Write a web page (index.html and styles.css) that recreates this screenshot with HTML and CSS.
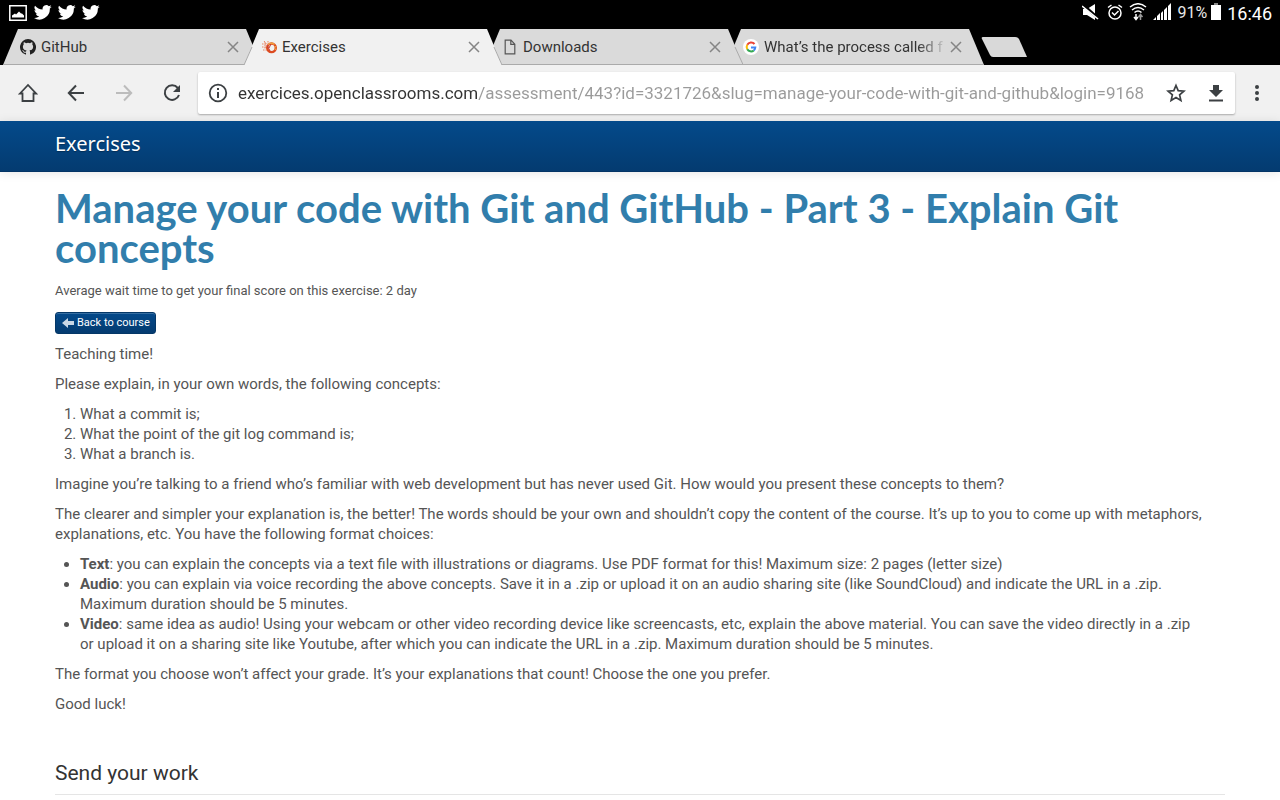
FILE: index.html
```html
<!DOCTYPE html>
<html lang="en">
<head>
<meta charset="utf-8">
<meta name="viewport" content="width=device-width, initial-scale=1">
<title>Exercises</title>
<link rel="stylesheet" href="styles.css">
</head>
<body>
<svg class="defs" aria-hidden="true">
  <symbol id="bird" viewBox="0 0 24 24"><path d="M23.6 4.9a9.700 9.700 0 0 1-2.800.8 4.900 4.900 0 0 0 2.100-2.700 9.700 9.700 0 0 1-3.100 1.200 4.900 4.900 0 0 0-8.300 4.400A13.900 13.900 0 0 1 1.400 3.500a4.900 4.900 0 0 0 1.500 6.500 4.900 4.900 0 0 1-2.200-.6c0 2.300 1.600 4.400 3.900 4.900a4.900 4.900 0 0 1-2.200.1 4.900 4.900 0 0 0 4.600 3.400A9.900 9.900 0 0 1-.3 19.800 13.900 13.900 0 0 0 21.100 7.400a10 10 0 0 0 2.500-2.500z"/></symbol>
  <symbol id="close" viewBox="0 0 12 12"><path d="M1 1l10 10M11 1L1 11" fill="none" stroke="#858585" stroke-width="1.500"/></symbol>
</svg>

<header class="browser">
  <div class="status">
    <div class="status-group">
      <svg width="18" height="18" viewBox="0 0 18 18"><path d="M.8 2.800h16.400v14.400H.8z" fill="none" stroke="#fff" stroke-width="1.500"/><path d="M3 14.500v-2l3-2 1 1 3-3 2 2h1l2 2v2z" fill="#fff"/></svg>
      <div class="birds">
        <svg width="18" height="18"><use href="#bird"/></svg>
        <svg width="18" height="18"><use href="#bird"/></svg>
        <svg width="18" height="18"><use href="#bird"/></svg>
      </div>
    </div>
    <div class="status-group">
      <svg class="mute" width="17" height="18" viewBox="0 0 17 18"><path d="M1 6h4l8-5v16L5 12H1z" fill="#fff"/><path d="M0 1l17 15" stroke="#000" stroke-width="3"/><path d="M0 3l16 13" stroke="#fff" stroke-width="1.600"/></svg>
      <svg width="16" height="18" viewBox="0 0 16 18" fill="none" stroke="#fff" stroke-width="1.500"><circle cx="8" cy="10" r="6"/><path d="M5 9.500l2.500 2.500 4-4M1 4.500L4.500 2M15 4.500L11.500 2"/></svg>
      <svg width="18" height="18" viewBox="0 0 18 18" fill="none" stroke="#fff" stroke-width="1.500"><path d="M1 4q8-6.500 16 0M3 7q6-5 12 0M5.500 9.500q3.500-3 7 0"/><path d="M7 11v5M5 14l2 2.500L9 14" /><path d="M11.500 17v-5M9.500 14l2-2.500 2 2.500" stroke="#999"/></svg>
      <svg width="18" height="18" viewBox="0 0 18 18" fill="#fff"><path d="M0 17l3-3v3zM4 13l3-3v7H4zM8 10l2-2v9H8zM11 7l3-3v13h-3zM15 3l3-3v17h-3z"/></svg>
      <span class="battery-text">91%</span>
      <svg width="10" height="17" viewBox="0 0 10 17"><path d="M3 1h4" stroke="#888" stroke-width="2"/><path d="M0 2h10v15H0z" fill="#fff"/></svg>
      <time class="clock">16:46</time>
    </div>
  </div>

  <nav class="tabs" aria-label="Open tabs">
    <div class="tab">
      <svg class="tab-shape" viewBox="0 0 258 36" preserveAspectRatio="none"><path d="M0 36L15 0H243L258 36z" fill="#dadada"/><path d="M0 35.500H258" stroke="#aaa"/></svg>
      <svg class="favicon" width="16" height="16" viewBox="0 0 16 16"><path fill="#222" d="M8 0a8 8 0 0 0-2.530 15.590c.4.070.55-.17.55-.38v-1.490c-2.230.49-2.700-.95-2.700-.95-.36-.92-.89-1.170-.89-1.170-.73-.5.060-.49.060-.49.800.06 1.230.83 1.230.83.710 1.220 1.870.87 2.330.67.070-.52.280-.87.510-1.070-1.780-.2-3.650-.89-3.650-3.950 0-.87.310-1.590.83-2.150-.08-.2-.36-1.020.080-2.120 0 0 .67-.21 2.200.82a7.600 7.600 0 0 1 4 0c1.530-1.030 2.200-.82 2.200-.82.440 1.100.160 1.920.080 2.120.52.560.82 1.280.82 2.150 0 3.070-1.870 3.750-3.650 3.950.29.250.54.730.54 1.480v2.190c0 .21.150.46.550.38A8 8 0 0 0 8 0z"/></svg>
      <a class="tab-title" href="#">GitHub</a>
      <button class="tab-close" aria-label="Close GitHub"><svg width="12" height="12"><use href="#close"/></svg></button>
    </div>
    <div class="tab tab-active">
      <svg class="tab-shape" viewBox="0 0 258 36" preserveAspectRatio="none"><path d="M0 36L15 0H243L258 36z" fill="#f1f1f1"/><path d="M0 36L8 18M250 18L258 36" stroke="#aaa"/></svg>
      <svg class="favicon" width="16" height="16" viewBox="0 0 16 16" fill="none"><circle cx="10.500" cy="8.800" r="4.300" stroke="#dc4b20" stroke-width="2.400"/><path d="M7 5.500q3.500-2.500 6.500 0" stroke="#f0a13e" stroke-width="1.500"/><path d="M14.500 7v4" stroke="#f0a13e" stroke-width="1.500" stroke-dasharray="1.500 1"/><path d="M1 5h5M1 8h5M2 11h4M3 2l4 5M7 2v5M4 3v7" stroke="#e98563" stroke-dasharray="1.500 1"/><path d="M6 6l3 6M10 5l-2 4" stroke="#c9362c"/></svg>
      <a class="tab-title" href="#" aria-current="page">Exercises</a>
      <button class="tab-close" aria-label="Close Exercises"><svg width="12" height="12"><use href="#close"/></svg></button>
    </div>
    <div class="tab tab-third">
      <svg class="tab-shape" viewBox="0 0 258 36" preserveAspectRatio="none"><path d="M0 36L15 0H243L258 36z" fill="#dadada"/><path d="M0 35.500H258L250 18" fill="none" stroke="#aaa"/></svg>
      <svg class="favicon" width="16" height="16" viewBox="0 0 16 16"><path d="M3.200 1.200h5.800l3.800 4v9.600H3.200zM8.800 1.200v4.200h4" fill="none" stroke="#555" stroke-width="1.200"/></svg>
      <a class="tab-title" href="#">Downloads</a>
      <button class="tab-close" aria-label="Close Downloads"><svg width="12" height="12"><use href="#close"/></svg></button>
    </div>
    <div class="tab">
      <svg class="tab-shape" viewBox="0 0 258 36" preserveAspectRatio="none"><path d="M0 36L15 0H243L258 36z" fill="#dadada"/><path d="M0 35.500H258" stroke="#aaa"/></svg>
      <svg class="favicon" width="16" height="16" viewBox="0 0 16 16" fill="none" stroke-width="2"><circle cx="8" cy="8" r="8" fill="#fff"/><path d="M11.500 5A4.300 4.300 0 0 0 4.300 5.800" stroke="#ea4335"/><path d="M4.300 5.800a4.300 4.300 0 0 0 0 4.400" stroke="#fbbc05"/><path d="M4.300 10.200a4.300 4.300 0 0 0 6.500 1.200" stroke="#34a853"/><path d="M10.800 11.400A4.300 4.300 0 0 0 12.300 8.500H8" stroke="#4285f4"/></svg>
      <a class="tab-title tab-title-faded" href="#">What’s the process called f</a>
      <button class="tab-close" aria-label="Close search"><svg width="12" height="12"><use href="#close"/></svg></button>
    </div>
    <button class="new-tab" aria-label="New tab"><svg width="46" height="20" viewBox="0 0 46 20"><path d="M2 0H34Q37 0 38 2L46 20H12Q10 20 9 18L1 2Q0 0 2 0z" fill="#d9d9d9"/></svg></button>
  </nav>

  <div class="toolbar">
    <button class="tool" aria-label="Home"><svg width="20" height="20" viewBox="0 0 20 20"><path d="M2 10.500L10 2l8 8.500h-2.500V18h-11v-7.500z" fill="none" stroke="#3c4043" stroke-width="1.800"/></svg></button>
    <button class="tool" aria-label="Back"><svg width="20" height="20" viewBox="0 0 20 20"><path d="M18 10H3M10 2.500L2.800 10l7.200 7.500" fill="none" stroke="#3c4043" stroke-width="2"/></svg></button>
    <button class="tool" aria-label="Forward" disabled><svg width="20" height="20" viewBox="0 0 20 20"><path d="M2 10h15M10 2.500l7.200 7.500-7.200 7.500" fill="none" stroke="#bcbcbc" stroke-width="2"/></svg></button>
    <button class="tool" aria-label="Reload"><svg width="20" height="20" viewBox="0 0 20 20"><path d="M15.800 5A7.300 7.300 0 1 0 17 12" fill="none" stroke="#3c4043" stroke-width="2"/><path d="M18 2v7h-7z" fill="#3c4043"/></svg></button>
    <div class="address">
      <svg width="20" height="20" viewBox="0 0 20 20"><circle cx="10" cy="10" r="8.300" fill="none" stroke="#3c4043" stroke-width="1.800"/><path d="M10 5v2M10 9v6" stroke="#3c4043" stroke-width="2"/></svg>
      <input class="url" type="text" aria-label="Address" value="exercices.openclassrooms.com/assessment/443?id=3321726&amp;slug=manage-your-code-with-git-and-github&amp;login=9168">
      <button class="tool-small" aria-label="Bookmark"><svg width="20" height="20" viewBox="0 0 20 20"><path d="M10 2.500l2.200 5.200 5.700.5-4.300 3.700 1.300 5.500-4.900-2.900-4.900 2.900 1.300-5.500-4.300-3.700 5.700-.5z" fill="none" stroke="#3c4043" stroke-width="1.700"/></svg></button>
      <button class="tool-small" aria-label="Download"><svg width="20" height="20" viewBox="0 0 20 20"><path d="M7 2h6v5h4l-7 7-7-7h4zM3 16.500h14v2H3z" fill="#3c4043"/></svg></button>
    </div>
    <button class="menu" aria-label="Menu"><svg width="20" height="20" viewBox="0 0 20 20" fill="#3c4043"><circle cx="10" cy="4" r="2"/><circle cx="10" cy="10" r="2"/><circle cx="10" cy="16" r="2"/></svg></button>
  </div>
</header>

<div class="navbar"><div class="container"><a class="brand" href="#">Exercises</a></div></div>

<main class="container">
  <h1>Manage your code with Git and GitHub - Part 3 - Explain Git concepts</h1>
  <p class="wait">Average wait time to get your final score on this exercise: 2 day</p>
  <a class="back" href="#"><svg width="12" height="10" viewBox="0 0 12 10"><path d="M0 5l6-5v3h6v4H6v3z" fill="#c9d7e5"/></svg>Back to course</a>
  <p>Teaching time!</p>
  <p>Please explain, in your own words, the following concepts:</p>
  <ol>
    <li>What a commit is;</li>
    <li>What the point of the git log command is;</li>
    <li>What a branch is.</li>
  </ol>
  <p>Imagine you’re talking to a friend who’s familiar with web development but has never used Git. How would you present these concepts to them?</p>
  <p>The clearer and simpler your explanation is, the better! The words should be your own and shouldn’t copy the content of the course. It’s up to you to come up with metaphors, explanations, etc. You have the following format choices:</p>
  <ul>
    <li><strong>Text</strong>: you can explain the concepts via a text file with illustrations or diagrams. Use PDF format for this! Maximum size: 2 pages (letter size)</li>
    <li><strong>Audio</strong>: you can explain via voice recording the above concepts. Save it in a .zip or upload it on an audio sharing site (like SoundCloud) and indicate the URL in a .zip. Maximum duration should be 5 minutes.</li>
    <li><strong>Video</strong>: same idea as audio! Using your webcam or other video recording device like screencasts, etc, explain the above material. You can save the video directly in a .zip or upload it on a sharing site like Youtube, after which you can indicate the URL in a .zip. Maximum duration should be 5 minutes.</li>
  </ul>
  <p>The format you choose won’t affect your grade. It’s your explanations that count! Choose the one you prefer.</p>
  <p>Good luck!</p>
  <h2>Send your work</h2>
</main>
</body>
</html>
```
FILE: styles.css
```css
* { box-sizing: border-box; }
body { margin: 0; background: #fff; color: #555; font: 15px/20px Roboto, sans-serif; }
svg { display: block; flex: none; }
button { padding: 0; border: 0; background: none; font: inherit; }
a { color: inherit; text-decoration: none; }
.defs { position: absolute; width: 0; height: 0; }

.browser { background: #000; }
.status { display: flex; justify-content: space-between; height: 29px; padding: 3px 8px 0 9px; color: #fff; }
.status-group { display: flex; align-items: flex-start; gap: 6px; }
.birds { display: flex; gap: 6px; margin-left: 1px; fill: #fff; }
.mute { margin-right: 2px; }
.battery-text { font-size: 16px; line-height: 20px; color: #e8e8e8; margin-right: -2px; }
.clock { font-size: 18px; line-height: 22px; }

.tabs { display: flex; height: 36px; padding-left: 3px; }
.tab { position: relative; display: flex; align-items: center; flex: 0 1 258px; min-width: 0; padding: 0 22px 0 17px; margin-right: -17px; }
.tab-active { z-index: 2; }
.tab-third { z-index: 1; }
.tab-shape { position: absolute; inset: 0; width: 100%; height: 100%; }
.favicon { position: relative; }
.tab-title { position: relative; flex: 1; min-width: 0; margin: 0 6px 0 5px; overflow: hidden; white-space: nowrap; color: #333; }
.tab-title-faded { -webkit-mask-image: linear-gradient(90deg, #000 85%, transparent 102%); mask-image: linear-gradient(90deg, #000 85%, transparent 102%); }
.tab-close { position: relative; }
.new-tab { align-self: center; margin-left: 14px; }

.toolbar { display: flex; align-items: center; height: 56px; background: #f1f1f1; padding: 0 0 0 4px; }
.tool { display: flex; justify-content: center; width: 48px; }
.address { display: flex; align-items: center; flex: 1; min-width: 0; height: 42px; margin-left: 2px; padding: 0 9px 0 10px; border-radius: 2px; background: #fff; box-shadow: 0 1px 2px rgba(0,0,0,.3); }
.url { flex: 1; min-width: 0; height: 32px; margin: 0 9px 0 10px; padding: 0; border: 0; outline: 0; font: 17px/24px Roboto, sans-serif; color: transparent; background: linear-gradient(90deg, #333 240px, #9a9a9a 240px); -webkit-background-clip: text; background-clip: text; }
.tool-small + .tool-small { margin-left: 20px; }
.menu { display: flex; justify-content: center; width: 45px; padding-right: 2px; }

.navbar { height: 51px; background: linear-gradient(#044a8b, #043b70); border-bottom: 1px solid #033465; box-shadow: 0 1px 10px rgba(0,0,0,.1); }
.container { width: calc(100% - 40px); max-width: 1170px; margin: 0 auto; }
.brand { display: inline-block; padding-top: 13px; font: 20px/20px "Noto Sans", sans-serif; color: #fff; text-shadow: 0 1px 1px rgba(0,0,0,.3); }

h1 { margin: 16px 0 13px; font: bold 40px/40px Lato, sans-serif; color: #317eac; }
p { margin: 0 0 10px; }
.wait { font-size: 13px; }
.back { display: flex; align-items: center; gap: 3px; width: fit-content; height: 22px; margin: 11px 0 10px; padding: 0 5px 0 6px; border: 1px solid #043767; border-radius: 3px; background: linear-gradient(#044a8b, #043b70); box-shadow: inset 0 1px 0 rgba(255,255,255,.2); color: #fff; font-size: 11px; }
ol, ul { margin: 0 0 10px; padding: 0 20px 0 25px; }
h2 { margin: 39px 0 20px; border-bottom: 1px solid #e5e5e5; font: 21px/41px Roboto, sans-serif; color: #333; }
```
